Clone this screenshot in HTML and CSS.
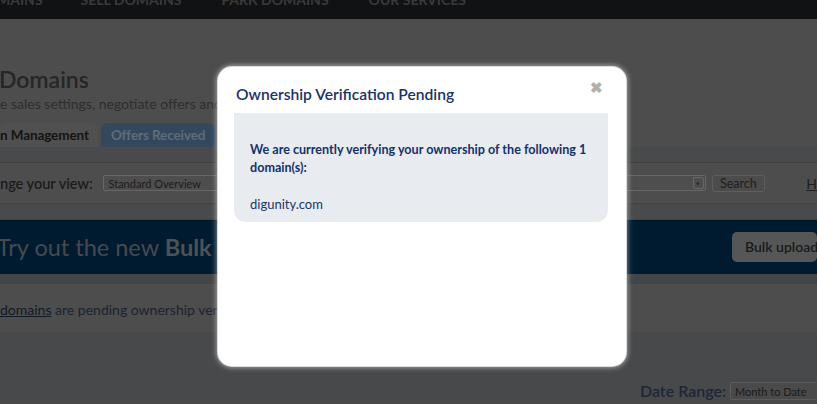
FILE: index.html
```html
<!DOCTYPE html>
<html lang="en">
<head>
<meta charset="utf-8">
<title>Domains</title>
<link rel="stylesheet" href="styles.css">
</head>
<body>
<div class="page">
  <nav class="topnav">
    <span class="nav-item first">MAINS</span>
    <span class="nav-item">SELL DOMAINS</span>
    <span class="nav-item">PARK DOMAINS</span>
    <span class="nav-item">OUR SERVICES</span>
  </nav>
  <header class="head">
    <h1 class="title">Domains</h1>
    <p class="subtitle">e sales settings, negotiate offers and a</p>
  </header>
  <div class="tabs">
    <span class="tab active">n Management</span>
    <span class="tab">Offers Received</span>
  </div>
  <div class="band"></div>
  <div class="view-row">
    <span class="view-label">nge your view:</span>
    <div class="select wide"><span>Standard Overview</span><span class="arrow">&#9662;</span></div>
    <button class="btn-search">Search</button>
    <a class="help">H</a>
  </div>
  <div class="band"></div>
  <div class="banner">
    <span class="banner-text">Try out the new <b>Bulk</b></span>
    <span class="banner-btn">Bulk uploade</span>
  </div>
  <div class="band dark"></div>
  <div class="notice"><a class="link">domains</a> are pending ownership verifica</div>
  <div class="lower">
    <span class="date-label">Date Range:</span>
    <div class="select small"><span>Month to Date</span></div>
  </div>
</div>

<div class="modal">
  <div class="modal-head">
    <h2 class="modal-title">Ownership Verification Pending</h2>
    <span class="close">&#10006;</span>
  </div>
  <div class="modal-body">
    <p class="msg">We are currently verifying your ownership of the following 1 domain(s):</p>
    <p class="domain">digunity.com</p>
  </div>
</div>
</body>
</html>
```
FILE: styles.css
```css
* { box-sizing: border-box; }
html, body { margin: 0; padding: 0; }
body {
  width: 817px;
  height: 404px;
  overflow: hidden;
  background: #48494b;
  font-family: "Source Sans Pro", Lato, "Noto Sans", sans-serif;
  position: relative;
}
.page { display: flex; flex-direction: column; background: #4d4d4d; }
.topnav {
  height: 19px;
  background: #111214;
  display: flex;
  overflow: hidden;
  align-items: flex-start;
}
.nav-item {
  color: #3a3a3b;
  font-weight: 700;
  font-size: 14px;
  line-height: 14px;
  margin-top: -7px;
  letter-spacing: 0;
  margin-left: 40px;
  white-space: nowrap;
}
.nav-item.first { margin-left: -3px; }
.nav-item:nth-child(2) { margin-left: 38px; }
.head { padding: 47px 0 0 0; }
.title {
  margin: 0;
  font-size: 23px;
  font-weight: 600;
  color: #262626;
  line-height: 26px;
  margin-left: -1px;
}
.subtitle {
  margin: 3px 0 0 0;
  font-size: 14px;
  line-height: 18px;
  color: #2e2e2e;
}
.tabs { display: flex; gap: 3px; margin-top: 10px; height: 24px; }
.tab {
  font-size: 13.5px;
  font-weight: 700;
  line-height: 24px;
  padding: 0 10px;
  border-radius: 6px 6px 0 0;
  background: #34485d;
  color: #5f6c7a;
  letter-spacing: -0.1px;
  white-space: nowrap;
}
.tab.active { background: #505050; color: #141414; padding: 0 9px 0 0; }
.band { height: 16px; background: #494a4b; border-bottom: 1px solid #404142; }
.band.dark { height: 10px; background: #444546; border-bottom: none; }
.view-row {
  height: 41px;
  display: flex;
  align-items: center;
  border-bottom: 1px solid #444;
}
.view-label { font-size: 14.5px; font-weight: 600; color: #1b1b1b; width: 104px; white-space: nowrap; }
.select {
  height: 16px;
  border: 1px solid #666;
  border-radius: 2px;
  display: flex;
  align-items: center;
  justify-content: space-between;
  font-size: 11px;
  color: #1c1c1c;
  padding: 0 1px 0 4px;
  background: #4e4e4e;
  white-space: nowrap;
}
.select.wide { width: 605px; }
.arrow {
  width: 11px; height: 12px;
  border: 1px solid #666; border-radius: 2px;
  font-size: 7px; line-height: 10px; text-align: center; color: #2a2a2a;
}
.btn-search {
  margin-left: 6px;
  height: 17px;
  width: 54px;
  border: 1px solid #5e5e5e;
  border-radius: 3px;
  background: #4c4c4c;
  font-family: inherit;
  font-size: 12.5px;
  color: #1e1e1e;
  padding: 0;
}
.help { margin-left: 41px; font-size: 14px; color: #1c1c1c; text-decoration: underline; }
.banner {
  height: 54px;
  background: #001b30;
  display: flex;
  align-items: center;
  justify-content: space-between;
}
.banner-text { font-size: 23.5px; color: #464a4f; margin-left: -3px; white-space: nowrap; }
.banner-text b { color: #4e5257; font-weight: 700; }
.banner-btn {
  background: #555657;
  border-radius: 5px;
  height: 30px;
  line-height: 30px;
  padding: 0 0 0 13px;
  width: 85px;
  font-size: 14px;
  font-weight: 600;
  color: #1a1a1a;
  white-space: nowrap;
  overflow: hidden;
}
.notice {
  height: 48px;
  line-height: 52px;
  font-size: 14px;
  color: #1c2330;
  background: #4d4d4d;
  white-space: nowrap;
}
.link { text-decoration: underline; color: #111a26; }
.lower {
  height: 71px;
  background: #48494b;
  display: flex;
  align-items: flex-end;
  justify-content: flex-end;
  padding-bottom: 3px;
}
.date-label { font-size: 16px; font-weight: 600; color: #1b2638; margin-right: 4px; }
.select.small { width: 87px; height: 18px; font-size: 11px; color: #1a1a1a; background: #4a4a4a; border-color: #5c5c5c; border-right: none; }

.modal {
  position: absolute;
  left: 218px;
  top: 67px;
  width: 408px;
  height: 299px;
  background: #fff;
  border-radius: 14px;
  box-shadow: 0 0 0 1px #dadada, 0 0 5px 2px rgba(255,255,255,0.45);
}
.modal-head { position: relative; height: 46px; padding: 16px 0 0 18px; }
.modal-title { margin: 0; font-size: 15.6px; font-weight: 600; color: #1a3265; line-height: 22px; }
.close {
  position: absolute;
  right: 23px;
  top: 11px;
  font-size: 15px;
  color: #b0b0b0;
  font-weight: 700;
}
.modal-body {
  margin: 0 18px 0 16px;
  height: 109px;
  background: #e8ebf0;
  border-radius: 0 0 12px 12px;
  padding: 28px 16px 0 16px;
}
.msg { margin: 0; font-size: 12.6px; font-weight: 700; line-height: 18px; color: #15326a; }
.domain { margin: 18px 0 0 0; font-size: 13px; line-height: 18px; color: #1b3466; }
```
